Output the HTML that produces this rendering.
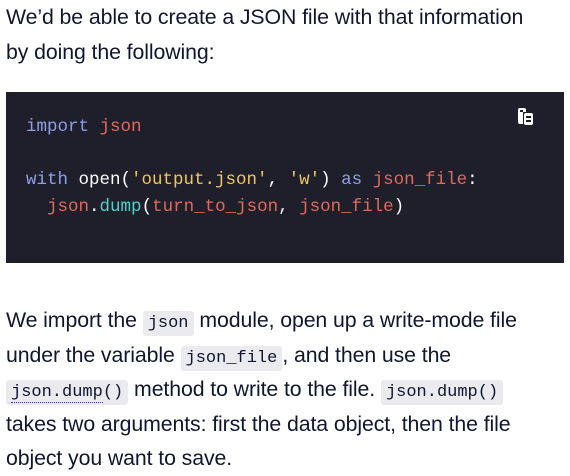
<!DOCTYPE html>
<html><head><meta charset="utf-8"><style>
body{margin:0;width:570px;height:476px;background:#fff;overflow:hidden;font-family:"Liberation Sans",sans-serif;color:#10162f;}
p{margin:0;font-size:21.3px;line-height:34.6px;position:absolute;left:6px;width:580px;white-space:nowrap;letter-spacing:-0.1px;}
.code{position:absolute;left:6px;top:92px;width:558px;height:171px;background:#1f1f2b;}
pre{margin:0;position:absolute;left:20px;top:22px;font-family:"Liberation Mono",monospace;font-size:17.5px;line-height:26.5px;color:#fff;}
.k{color:#8f9ee8}.v{color:#e2695b}.s{color:#f0c55e}.f{color:#4cd2c8}
code{font-family:"Liberation Mono",monospace;font-size:17px;line-height:16px;background:#eaeaef;border-radius:3px;padding:3px 5px;letter-spacing:0;}
.u{border-bottom:1px dotted #3333ff}
</style></head><body>
<p style="top:0">We’d be able to create a JSON file with that information<br>by doing the following:</p>
<div class="code">
<pre><span class="k">import</span> <span class="v">json</span>

<span class="k">with</span> open(<span class="s">'output.json'</span>, <span class="s">'w'</span>) <span class="k">as</span> <span class="v">json_file</span>:
  <span class="v">json</span>.<span class="f">dump</span>(<span class="v">turn_to_json</span>, <span class="v">json_file</span>)</pre>
<svg style="position:absolute;left:510px;top:15px" width="20" height="20" viewBox="0 0 20 20"><path d="M2 3a2 2 0 0 1 2-2h4a2 2 0 0 1 2 2v2H7v12H4a2 2 0 0 1-2-2z" fill="#fff"/><rect x="4" y="3" width="3" height="2" fill="#1f1f2b"/><rect x="8" y="6" width="9" height="12" rx="2" fill="#fff"/><rect x="10" y="9" width="5" height="2" fill="#1f1f2b"/><rect x="10" y="13" width="5" height="2" fill="#1f1f2b"/></svg>
</div>
<p style="top:303px">We import the <code>json</code> module, open up a write-mode file<br>under the variable <code>json_file</code>, and then use the<br><code><span class="u">json.dump</span>()</code> method to write to the file. <code>json.dump()</code><br>takes two arguments: first the data object, then the file<br>object you want to save.</p>
</body></html>
